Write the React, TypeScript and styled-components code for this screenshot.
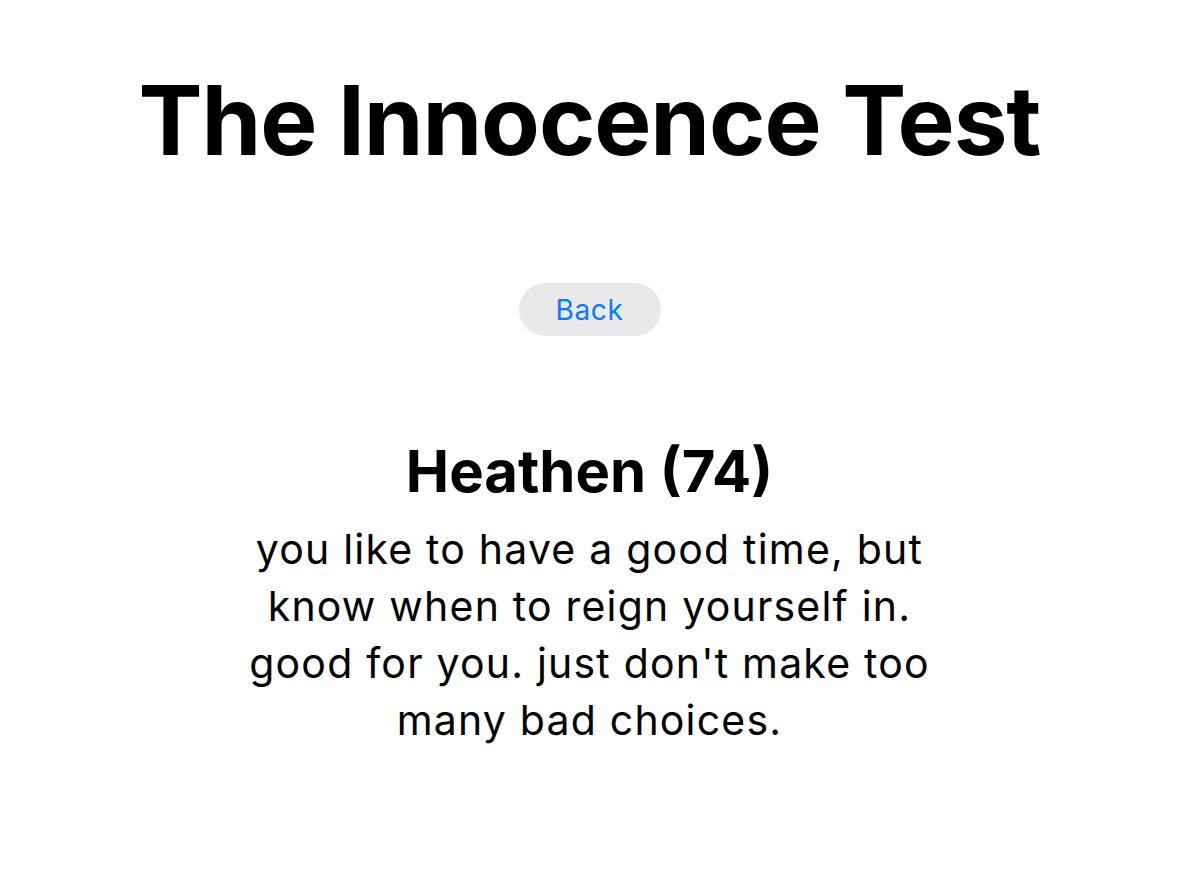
import React from "react";
import styled, { createGlobalStyle } from "styled-components";

const GlobalStyle = createGlobalStyle`
  html, body {
    margin: 0;
    padding: 0;
    background: #ffffff;
  }
  body {
    font-family: Inter, "Noto Sans", "Liberation Sans", sans-serif;
    color: #000000;
  }
`;

const Page = styled.main`
  display: flex;
  flex-direction: column;
  align-items: center;
  padding-top: 62px;
`;

const Title = styled.h1`
  margin: 0;
  font-size: 96px;
  font-weight: 700;
  line-height: 116px;
  letter-spacing: -1.1px;
`;

const BackButton = styled.button`
  margin-top: 105px;
  width: 142px;
  height: 53px;
  border: none;
  border-radius: 27px;
  background: #e9e9eb;
  color: #0a7aff;
  font-family: inherit;
  font-size: 28px;
  font-weight: 400;
  letter-spacing: 0.6px;
  cursor: pointer;
`;

const Result = styled.section`
  margin-top: 100px;
  display: flex;
  flex-direction: column;
  align-items: center;
  text-align: center;
`;

const ResultTitle = styled.h2`
  margin: 0;
  font-size: 58px;
  font-weight: 700;
  line-height: 70px;
`;

const ResultText = styled.p`
  margin: 15px 0 0;
  font-size: 41px;
  font-weight: 400;
  line-height: 57px;
  letter-spacing: 1.2px;
`;

export default function App() {
  return (
    <>
      <GlobalStyle />
      <Page>
        <Title>The Innocence Test</Title>
        <BackButton>Back</BackButton>
        <Result>
          <ResultTitle>Heathen (74)</ResultTitle>
          <ResultText>
            you like to have a good time, but
            <br />
            know when to reign yourself in.
            <br />
            good for you. just don't make too
            <br />
            many bad choices.
          </ResultText>
        </Result>
      </Page>
    </>
  );
}
